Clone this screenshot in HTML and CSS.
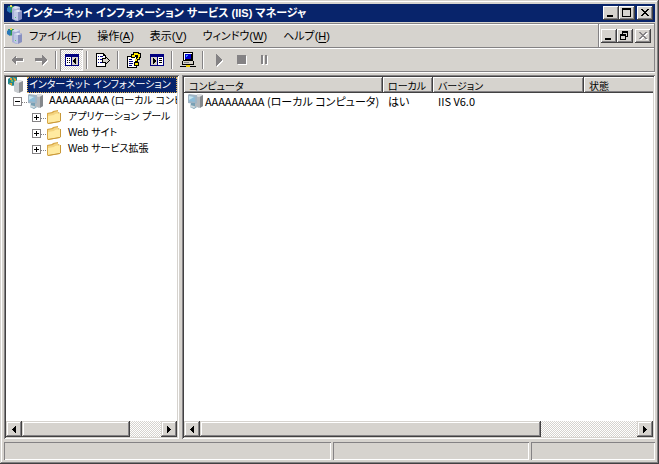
FILE: index.html
```html
<!DOCTYPE html>
<html lang="ja">
<head>
<meta charset="utf-8">
<title>インターネット インフォメーション サービス (IIS) マネージャ</title>
<link rel="stylesheet" href="styles.css">
</head>
<body>
<svg class="defs" aria-hidden="true">
  <symbol id="server" viewBox="0 0 16 16">
    <path fill="#2f9a50" d="M1 1h6v4l-3 3-3-3z"/>
    <path fill="#2878b8" d="M0 3l3-2 1 3-1 4-3-2z"/>
    <path fill="#e8d860" d="M3 0h2v2H3z"/>
    <path fill="#a8b0d8" d="M5 3l3-2 5 1v12l-4 2-4-2z"/>
    <path fill="#dce0f0" d="M5 3l3-2 5 1-4 2z"/>
    <path fill="#8890c0" d="M10 6l4-1 1 1v8l-4 2-2-1z"/>
    <path fill="#c0c8e4" d="M7 6l4 1v9l-4-2z"/>
    <path fill="#eef0fa" d="M7 6l4-1 4 1-4 1z"/>
    <path fill="#58c870" d="M8 12h1v1H8z"/>
  </symbol>
  <symbol id="root" viewBox="0 0 16 16">
    <path fill="#208890" d="M0 2l3-2h6v6L5 9 0 7z"/>
    <path fill="#e0a030" d="M2 1h2v2H2zM5 0l3 2v3L6 3zM1 6h3v3z"/>
    <path fill="#70b860" d="M3 3h2v2H3z"/>
    <path fill="#b8bcc0" d="M6 5l4-2 5 1v10l-5 2-4-2z"/>
    <path fill="#e4e6e8" d="M6 5l4-2 5 1-5 2z"/>
    <path fill="#8c9094" d="M11 6l4-2v10l-4 2z"/>
    <path fill="#c8ccd0" d="M6 5l5 1v10l-5-2z"/>
  </symbol>
  <symbol id="computer" viewBox="0 0 16 16">
    <path fill="#b4b8bc" d="M8 3l3-2 5 1v11l-4 2-4-2z"/>
    <path fill="#dcdee0" d="M8 3l3-2 5 1-4 2z"/>
    <path fill="#84888c" d="M13 4l3-2v11l-3 2z"/>
    <path fill="#a0b4c4" d="M1 2l1-1 8 1v8l-2 1-7-1z"/>
    <path fill="#8cbcd8" d="M2 3l6 1v5L2 8z"/>
    <path fill="#c4e4f0" d="M2 3l5 1-5 3z"/>
    <path fill="#78a0b4" d="M4 10h4v3l2 1-3 2-4-2z"/>
    <path fill="#d0d8dc" d="M3 12l4 1 2 1-2 1-4-1z"/>
  </symbol>
  <symbol id="folder" viewBox="0 0 16 16">
    <path fill="#d8a848" d="M1 4l5-1 1-1 5-1v2l2 1v9L2 15l-1-1z"/>
    <path fill="#f4d480" d="M2 5l5-1 1-1 4-1v10L2 14z"/>
    <path fill="#ffeaa0" d="M2 7l6-1 1-1 5-1v8L2 14z"/>
    <path fill="#c89838" d="M14 4h1v8l-2 1-11 2v-1l12-2z"/>
  </symbol>
  <symbol id="minimize" viewBox="0 0 12 10"><path d="M2 7h6v2H2z"/></symbol>
  <symbol id="maximize" viewBox="0 0 12 10"><path fill-rule="evenodd" d="M1 0h9v9H1zM2 2v6h7V2z"/></symbol>
  <symbol id="restore" viewBox="0 0 12 10"><path fill-rule="evenodd" d="M3 0h6v6H7V5h1V2H4v1H3zM1 3h6v6H1zM2 5v3h4V5z"/></symbol>
  <symbol id="close" viewBox="0 0 12 10"><path d="M2 1h2v1h1v1h2V2h1V1h2v1H9v1H8v1H7v1h1v1h1v1h1v1H8V7H7V6H5v1H4v1H2V7h1V6h1V5h1V4H4V3H3V2H2z"/></symbol>
  <symbol id="arrow-left" viewBox="0 0 4 7"><path d="M3 0h1v7H3V6H2V5H1V4H0V3h1V2h1V1h1z"/></symbol>
  <symbol id="arrow-right" viewBox="0 0 4 7"><path d="M0 0h1v1h1v1h1v1h1v1H3v1H2v1H1v1H0z"/></symbol>
</svg>
<div class="window">
  <header class="titlebar">
    <svg class="icon"><use href="#server"/></svg>
    <h1>インターネット インフォメーション サービス (IIS) マネージャ</h1>
    <div class="window-buttons">
      <button class="caption" aria-label="最小化"><svg><use href="#minimize"/></svg></button>
      <button class="caption" aria-label="最大化"><svg><use href="#maximize"/></svg></button>
      <button class="caption last" aria-label="閉じる"><svg><use href="#close"/></svg></button>
    </div>
  </header>

  <div class="bars">
    <div class="menubar">
      <svg class="icon"><use href="#server"/></svg>
      <nav class="menus">
        <button>ファイル(<u>F</u>)</button>
        <button>操作(<u>A</u>)</button>
        <button>表示(<u>V</u>)</button>
        <button>ウィンドウ(<u>W</u>)</button>
        <button>ヘルプ(<u>H</u>)</button>
      </nav>
      <div class="window-buttons child">
        <button class="caption" aria-label="子ウィンドウの最小化"><svg><use href="#minimize"/></svg></button>
        <button class="caption" aria-label="元に戻す"><svg><use href="#restore"/></svg></button>
        <button class="caption last" aria-label="子ウィンドウを閉じる" disabled><svg><use href="#close"/></svg></button>
      </div>
    </div>
    <div class="toolbar">
      <button class="tool dim" aria-label="戻る" disabled><svg viewBox="0 0 16 16"><path d="M1 8l5-5v3h7v3H6v4z"/></svg></button>
      <button class="tool dim" aria-label="進む" disabled><svg viewBox="0 0 16 16"><path d="M14 8L9 3v3H2v3h7v4z"/></svg></button>
      <span class="separator"></span>
      <button class="tool pressed" aria-label="コンソール ツリーの表示" aria-pressed="true"><svg viewBox="0 0 16 16"><path fill="#000080" d="M1 2h14v12H1z"/><path fill="#fff" d="M2 5h5v8H2z"/><path fill="#d4d0c8" d="M8 5h6v8H8z"/><path d="M3 6h1v1H3zM5 6h1v1H5zM3 8h1v1H3zM5 8h1v1H5zM3 10h1v1H3zM5 10h1v1H5zM12 6v6H11v-1h-1v-1H9V8h1V7h1V6z"/></svg></button>
      <span class="separator"></span>
      <button class="tool" aria-label="一覧のエクスポート"><svg viewBox="0 0 16 16"><path d="M1 1h8v1h1v1h1v3h-1V4H8V2H2v12h8v-2h1v3H1z"/><path fill="#fff" d="M2 2h6v2h2v10H2z"/><path fill="#000080" d="M3 4h1v1H3zM5 4h3v1H5zM3 7h1v1H3zM5 7h2v1H5zM3 10h1v1H3zM5 10h2v1H5z"/><path d="M7 6h3V4h1v1h1v1h1v1h1v1h1v1h-1v1h-1v1h-1v1h-1v1h-1v-2H7z"/><path fill="#d4d0c8" d="M8 7h3V6h1v1h1v1h1v1h-1v1h-1v1h-1v-1H8z"/></svg></button>
      <span class="separator"></span>
      <button class="tool" aria-label="ヘルプ"><svg viewBox="0 0 16 16"><path d="M1 4h10v12H1z"/><path fill="#fff" d="M2 5h8v10H2z"/><path fill="#000080" d="M3 7h3v1H3zM3 9h4v1H3zM3 11h4v1H3zM3 13h3v1H3z"/><path d="M7 0h6v1h2v5h-1v2h-2v2h1v4H8v-4h1V7h2V5H9v1H5V2h2z"/><path fill="#ffe800" d="M8 1h4v1h2v3h-1v2h-2v2H9V7h2V6h1V3H9v2H6V3h2zM9 11h3v2H9z"/></svg></button>
      <button class="tool" aria-label="操作ウィンドウの表示"><svg viewBox="0 0 16 16"><path fill="#000080" d="M1 2h14v12H1z"/><path fill="#fff" d="M9 5h5v8H9z"/><path fill="#d4d0c8" d="M2 5h6v8H2z"/><path d="M10 6h3v1h-3zM10 8h3v1h-3zM10 10h3v1h-3zM4 6h1v1h1v1h1v2H6v1H5v1H4z"/></svg></button>
      <span class="separator"></span>
      <button class="tool" aria-label="コンピュータの接続"><svg viewBox="0 0 16 16"><path d="M3 0h10v9h1v4H9v1h7v1H0v-1h7v-1H2V9h1z"/><path fill="#fff" d="M4 1h8v1H5v6H4z"/><path fill="#0000d0" d="M5 2h6v5H5z"/><path fill="#40a0ff" d="M6 3h2v1H7v1H6z"/><path fill="#d4d0c8" d="M3 9h10v3H3z"/><path fill="#808080" d="M4 10h5v1H4z"/><path fill="#f0d000" d="M6 13h4v2H6z"/></svg></button>
      <span class="separator"></span>
      <button class="tool dim" aria-label="開始" disabled><svg viewBox="0 0 16 16"><path d="M5 2l6 6-6 6z"/></svg></button>
      <button class="tool dim" aria-label="停止" disabled><svg viewBox="0 0 16 16"><path d="M3 3h9v9H3z"/></svg></button>
      <button class="tool dim" aria-label="一時停止" disabled><svg viewBox="0 0 16 16"><path d="M4 3h2v9H4zM8 3h2v9H8z"/></svg></button>
    </div>
  </div>

  <main class="panes">
    <section class="pane">
      <ul class="tree">
        <li class="node selected"><svg class="icon"><use href="#root"/></svg><span class="label">インターネット インフォメーション</span></li>
        <li class="node level1"><button class="expander" aria-label="折りたたむ"></button><svg class="icon"><use href="#computer"/></svg><span class="label">AAAAAAAAA (ローカル コンピュータ)</span></li>
        <li class="node level2"><button class="expander plus" aria-label="展開"></button><svg class="icon"><use href="#folder"/></svg><span class="label">アプリケーション プール</span></li>
        <li class="node level2"><button class="expander plus" aria-label="展開"></button><svg class="icon"><use href="#folder"/></svg><span class="label">Web サイト</span></li>
        <li class="node level2"><button class="expander plus" aria-label="展開"></button><svg class="icon"><use href="#folder"/></svg><span class="label">Web サービス拡張</span></li>
      </ul>
      <div class="scrollbar">
        <button aria-label="左へ"><svg><use href="#arrow-left"/></svg></button>
        <div class="track"><div class="thumb"></div></div>
        <button aria-label="右へ"><svg><use href="#arrow-right"/></svg></button>
      </div>
    </section>
    <section class="pane">
      <div class="list">
        <table>
          <colgroup><col class="name"><col class="local"><col class="version"><col></colgroup>
          <thead><tr><th>コンピュータ</th><th>ローカル</th><th>バージョン</th><th>状態</th></tr></thead>
          <tbody><tr><td><div class="item"><svg class="icon"><use href="#computer"/></svg>AAAAAAAAA (ローカル コンピュータ)</div></td><td>はい</td><td>IIS V6.0</td><td></td></tr></tbody>
        </table>
      </div>
      <div class="scrollbar">
        <button aria-label="左へ"><svg><use href="#arrow-left"/></svg></button>
        <div class="track"><div class="thumb"></div></div>
        <button aria-label="右へ"><svg><use href="#arrow-right"/></svg></button>
      </div>
    </section>
  </main>

  <footer class="statusbar"><div></div><div></div><div></div></footer>
</div>
</body>
</html>
```
FILE: styles.css
```css
:root {
  --face: #d6d3ce;
  --shadow: #848284;
  --dark: #424142;
  --navy: #08246b;
}

* { box-sizing: border-box; }

body {
  margin: 0;
  color: #000;
  font: 11px/16px "Liberation Sans", "Noto Sans CJK JP", sans-serif;
  font-feature-settings: "palt";
}

button {
  margin: 0;
  padding: 0;
  border: 0;
  background: none;
  color: inherit;
  font: inherit;
  font-feature-settings: inherit;
}

svg { display: block; flex: none; shape-rendering: crispEdges; }
.defs { position: absolute; width: 0; height: 0; }
.icon { width: 16px; height: 16px; shape-rendering: auto; }

.window {
  display: flex;
  flex-direction: column;
  height: 100vh;
  padding: 4px;
  background: var(--face);
  box-shadow: inset -1px -1px var(--dark), inset 1px 1px var(--face),
    inset -2px -2px var(--shadow), inset 2px 2px #fff;
}

.titlebar {
  display: flex;
  align-items: center;
  height: 18px;
  padding: 0 2px 0 3px;
  background: var(--navy);
  color: #fff;
}

h1 {
  flex: 1;
  margin: 0;
  overflow: hidden;
  font-size: 11px;
  font-weight: bold;
  white-space: nowrap;
}

.window-buttons { display: flex; flex: none; }

.caption {
  display: grid;
  place-items: center;
  width: 16px;
  height: 14px;
  background: var(--face);
  color: #000;
  box-shadow: inset -1px -1px var(--dark), inset 1px 1px #fff, inset -2px -2px var(--shadow);
}
.caption svg { width: 12px; height: 10px; fill: currentColor; }
.caption.last { margin-left: 2px; }
.caption:disabled { color: var(--shadow); }
.caption:disabled svg { filter: drop-shadow(1px 1px #fff); }

.bars {
  flex: none;
  margin: 1px 0 3px;
  border: 1px solid var(--shadow);
  border-width: 1px 1px 1px 0;
  box-shadow: inset 1px 1px #fff, 0 1px #fff;
}

.menubar {
  display: flex;
  align-items: center;
  height: 24px;
  padding-left: 3px;
  border-bottom: 1px solid var(--shadow);
}

.menus { display: flex; flex: 1; gap: 16px; padding-left: 6px; }
.menus button { white-space: nowrap; }
u { text-underline-offset: 2px; }

.child {
  align-items: center;
  align-self: stretch;
  padding: 0 3px 0 2px;
  border-left: 1px solid var(--shadow);
  box-shadow: inset 1px 0 #fff;
}

.toolbar {
  display: flex;
  align-items: center;
  height: 23px;
  padding-left: 2px;
  box-shadow: inset 1px 1px #fff;
}

.tool { display: grid; place-items: center; width: 23px; height: 22px; }
.tool svg { width: 16px; height: 16px; }
.dim svg { fill: var(--shadow); filter: drop-shadow(1px 1px #fff); }
.pressed {
  background: repeating-conic-gradient(#fff 0 25%, var(--face) 0 50%) 0 0 / 2px 2px;
  box-shadow: inset 1px 1px var(--shadow), inset -1px -1px #fff;
}

.separator {
  width: 2px;
  height: 18px;
  margin: 0 3px;
  border-left: 1px solid var(--shadow);
  border-right: 1px solid #fff;
}

.panes {
  display: grid;
  flex: 1;
  grid-template-columns: 27fr 73fr;
  gap: 3px;
  min-height: 0;
}

.pane {
  display: flex;
  flex-direction: column;
  min-width: 0;
  padding: 2px;
  background: #fff;
  box-shadow: inset 1px 1px var(--shadow), inset -1px -1px #fff,
    inset 2px 2px var(--dark), inset -2px -2px var(--face);
}

.tree {
  flex: 1;
  margin: 0;
  padding: 0 0 0 2px;
  overflow: hidden;
  font-size: 10px;
  list-style: none;
}

.node { display: flex; align-items: center; height: 16px; white-space: nowrap; }
.label { padding-left: 6px; }
.selected .label {
  flex: 1;
  height: 16px;
  margin-left: 3px;
  padding-left: 2px;
  overflow: hidden;
  outline: 1px dotted #e0b050;
  outline-offset: -1px;
  background: var(--navy);
  color: #fff;
}
.level1 { padding-left: 5px; }
.level2 { padding-left: 24px; }

.expander {
  flex: none;
  width: 9px;
  height: 9px;
  margin-right: 5px;
  border: 1px solid var(--shadow);
  background: linear-gradient(#000, #000) center / 5px 1px no-repeat;
}
.plus {
  background: linear-gradient(#000, #000) center / 5px 1px no-repeat,
    linear-gradient(#000, #000) center / 1px 5px no-repeat;
}
.expander::after {
  content: "";
  display: block;
  width: 5px;
  margin: 3px 0 0 8px;
  border-top: 1px dotted var(--shadow);
}

.list { flex: 1; min-height: 0; overflow: hidden; }

table { width: 100%; border-collapse: collapse; table-layout: fixed; }
.name { width: 199px; }
.local { width: 50px; }
.version { width: 151px; }

th, td {
  height: 16px;
  padding: 0 0 0 5px;
  overflow: hidden;
  font-family: "Noto Sans CJK JP", sans-serif;
  font-weight: normal;
  line-height: 15px;
  text-align: left;
  white-space: nowrap;
}
th {
  background: var(--face);
  font-size: 10px;
  box-shadow: inset -1px -1px var(--dark), inset 1px 1px #fff, inset -2px -2px var(--shadow);
}
th:last-child { box-shadow: inset 0 -1px var(--dark), inset 1px 1px #fff, inset 0 -2px var(--shadow); }
td:first-child { padding-left: 3px; }
.item { display: flex; align-items: center; gap: 2px; }

.scrollbar { display: flex; flex: none; height: 16px; }
.scrollbar button, .thumb {
  background: var(--face);
  box-shadow: inset -1px -1px var(--dark), inset 1px 1px var(--face),
    inset -2px -2px var(--shadow), inset 2px 2px #fff;
}
.scrollbar button { display: grid; place-items: center; width: 16px; }
.scrollbar svg { width: 4px; height: 7px; }
.track {
  flex: 1;
  background: repeating-conic-gradient(#fff 0 25%, var(--face) 0 50%) 0 0 / 2px 2px;
}
.thumb { width: 78%; height: 100%; }

.statusbar {
  display: grid;
  flex: none;
  grid-template-columns: 327fr 196fr 124fr;
  gap: 2px;
  height: 18px;
  margin-top: 3px;
}
.statusbar div { box-shadow: inset 1px 1px var(--shadow), inset -1px -1px #fff; }
```
